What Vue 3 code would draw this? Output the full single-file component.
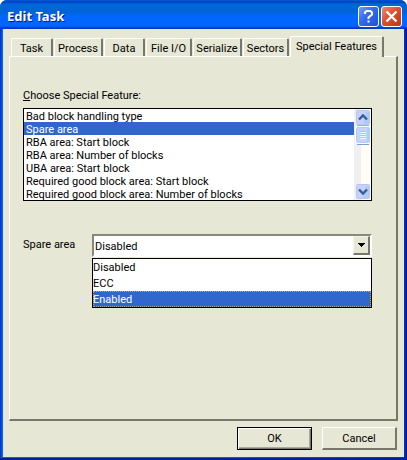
<script setup>
import { ref } from 'vue'

const tabs = ['Task', 'Process', 'Data', 'File I/O', 'Serialize', 'Sectors', 'Special Features']
const activeTab = ref('Special Features')

const features = [
  'Bad block handling type',
  'Spare area',
  'RBA area: Start block',
  'RBA area: Number of blocks',
  'UBA area: Start block',
  'Required good block area: Start block',
  'Required good block area: Number of blocks',
]
const feature = ref('Spare area')

const values = ['Disabled', 'ECC', 'Enabled']
const value = ref('Disabled')
const hovered = ref('Enabled')
</script>

<template>
  <main class="window">
    <header class="titlebar">
      <h1 class="title">Edit Task</h1>
      <button class="caption help" type="button" aria-label="Help">
        <svg viewBox="0 0 19 19" width="19" height="19" aria-hidden="true">
          <path d="M6 7V5.500L7.500 4h4L13 5.500v2L9.500 10.500V12" fill="none" stroke="#fff" stroke-width="2" />
          <rect x="8.500" y="13.500" width="2" height="2" fill="#fff" />
        </svg>
      </button>
      <button class="caption close" type="button" aria-label="Close">
        <svg viewBox="0 0 19 19" width="19" height="19" aria-hidden="true">
          <path d="M4.500 4.500l10 10M14.500 4.500l-10 10" stroke="#fff" stroke-width="2.400" />
        </svg>
      </button>
    </header>

    <div class="body">
      <div class="tabs" role="tablist">
        <button
          v-for="tab in tabs"
          :key="tab"
          type="button"
          role="tab"
          class="tab"
          :class="{ active: tab === activeTab }"
          :aria-selected="tab === activeTab"
          @click="activeTab = tab"
        >{{ tab }}</button>
      </div>

      <section class="panel" role="tabpanel">
        <label class="label" for="feature"><u>C</u>hoose Special Feature:</label>
        <div class="listbox">
          <select id="feature" v-model="feature" class="list" size="7">
            <option v-for="item in features" :key="item" :value="item">{{ item }}</option>
          </select>
          <div class="scrollbar" aria-hidden="true">
            <svg class="arrow" viewBox="0 0 16 17" width="16" height="17">
              <rect x="1.500" y="1.500" width="13" height="14" rx="1" fill="#c8d0ff" stroke="#b4c8f6" />
              <path d="M11 3h3v12H8z" fill="#aecbf5" />
              <path d="M4 10.500L8 6.500L12 10.500" fill="none" stroke="#335f94" stroke-width="2.400" />
              <path d="M2 16.500h12" stroke="#93b4dc" />
            </svg>
            <svg class="thumb" viewBox="0 0 16 19" width="16" height="19">
              <rect x=".5" y=".5" width="15" height="17" rx="2" fill="#fff" stroke="#fff" />
              <rect x="1.500" y="1.500" width="13" height="15" rx="1" fill="#c8d3ff" stroke="#b0ccf8" />
              <path d="M12 2h2v14h-2z" fill="#acd0f8" />
              <path d="M5 6.500h6M5 8.500h6M5 10.500h6M5 12.500h6" stroke="#f2f8ff" />
              <path d="M5 5.500h6M5 7.500h6M5 9.500h6M5 11.500h6" stroke="#9ccdf8" />
              <path d="M2 18.500h12" stroke="#7ba4d4" />
            </svg>
            <svg class="arrow down" viewBox="0 0 16 17" width="16" height="17">
              <rect x="1.500" y="1.500" width="13" height="14" rx="1" fill="#c8d0ff" stroke="#b4c8f6" />
              <path d="M11 3h3v12H8z" fill="#aecbf5" />
              <path d="M4 6.500L8 10.500L12 6.500" fill="none" stroke="#335f94" stroke-width="2.400" />
            </svg>
          </div>
        </div>

        <div class="field">
          <label class="field-label" for="value">Spare area</label>
          <div class="combo">
            <select id="value" v-model="value" class="combo-box">
              <option v-for="item in values" :key="item" :value="item">{{ item }}</option>
            </select>
            <span class="combo-arrow" aria-hidden="true">
              <svg viewBox="0 0 7 4" width="7" height="4"><path d="M0 0h7v1H6v1H5v1H4v1H3V3H2V2H1V1H0z" /></svg>
            </span>
            <ul class="menu" role="listbox" aria-label="Spare area">
              <li
                v-for="item in values"
                :key="item"
                class="menu-item"
                :class="{ hovered: item === hovered }"
                role="option"
                :aria-selected="item === hovered"
                @mouseenter="hovered = item"
                @click="value = item"
              >{{ item }}</li>
            </ul>
          </div>
        </div>
      </section>

      <footer class="actions">
        <button class="push default" type="button">OK</button>
        <button class="push" type="button">Cancel</button>
      </footer>
    </div>
  </main>
</template>

<style>
body {
  margin: 0;
  background: #fff;
}
</style>

<style scoped>
* {
  box-sizing: border-box;
}

.window {
  display: flex;
  flex-direction: column;
  min-height: 100vh;
  padding: 0 3px 3px;
  border-radius: 7px 7px 0 0;
  background: linear-gradient(90deg, #0036d0 0, #0036d0 1px, #0066f0 2px, #0066f0 50%, #0038c4 calc(100% - 3px), #001494 100%);
  box-shadow: inset 0 -2px #00209c;
  color: #000;
  font: 11px/13px Roboto, "Liberation Sans", sans-serif;
}

button,
select {
  font: inherit;
  color: inherit;
}

.titlebar {
  display: flex;
  align-items: center;
  gap: 2px;
  height: 29px;
  margin: 0 -3px;
  padding: 3px 5px 0 7px;
  border-radius: 7px 7px 0 0;
  background: linear-gradient(#0058dc 0, #0040c0 2px, #0066d8 4px, #0064d4 12px, #0066ff 16px, #0066ff 26px, #0038d0 28px);
}

.title {
  flex: 1;
  margin: 0;
  color: #fff;
  font: bold 13px/16px "Noto Sans", "Open Sans", sans-serif;
  text-shadow: 1px 1px #00148c;
}

.caption {
  display: grid;
  place-items: center;
  width: 21px;
  height: 21px;
  padding: 0;
  border: 1px solid #fff;
  border-radius: 3px;
}

.help {
  background: linear-gradient(135deg, #6e98fa, #3369ee 45%, #1f52d8);
}

.close {
  background: linear-gradient(135deg, #ec8a70, #dc5030 45%, #bc3410);
}

.body {
  display: flex;
  flex: 1;
  flex-direction: column;
  padding: 7px 6px;
  background: #e6e7d5;
}

.tabs {
  display: grid;
  grid-template-columns: 42px 49px 41px 46px 49px 46px 94px;
  align-items: end;
  gap: 1px;
  padding: 0 2px;
}

.tab {
  height: 18px;
  padding: 2px 0 0;
  border: solid;
  border-width: 1px 2px 0 1px;
  border-color: #fff #77776c #fff #fff;
  border-radius: 2px 2px 0 0;
  background: #e6e7d5;
  white-space: nowrap;
}

.tab.active {
  position: relative;
  height: 21px;
  margin-bottom: -1px;
  padding: 0 0 2px;
}

.panel {
  flex: 1;
  padding: 32px 24px 0 13px;
  border: solid;
  border-width: 1px 2px 2px 1px;
  border-color: #fff #77776c #77776c #fff;
}

.label {
  display: block;
  margin-bottom: 6px;
}

.listbox {
  display: flex;
  height: 93px;
  border: 1px solid #000;
  background: #fff;
}

.list {
  flex: 1;
  min-width: 0;
  height: 91px;
  padding: 0;
  border: 0;
  outline: 0;
  overflow: hidden;
  background: #fff;
  scrollbar-width: none;
}

.list option {
  height: 13px;
  min-height: 13px;
  padding: 1px 2px 0;
  color: #000;
  line-height: 12px;
}

.list option:checked {
  background: linear-gradient(#3166cc, #3166cc);
  color: #fff;
  -webkit-text-fill-color: #fff;
}

.scrollbar {
  display: flex;
  flex-direction: column;
  width: 17px;
  padding-left: 1px;
  background: linear-gradient(90deg, #f0f0f0 7px, #fffdf5 7px);
}

.down {
  margin-top: auto;
}

.field {
  display: flex;
  align-items: flex-start;
  margin-top: 33px;
}

.field-label {
  width: 69px;
  padding-top: 4px;
}

.combo {
  position: relative;
  flex: 1;
}

.combo-box {
  display: block;
  width: 100%;
  height: 23px;
  padding: 1px 20px 0 1px;
  appearance: none;
  border: 2px solid;
  border-color: #88887c #fff #fff #88887c;
  border-radius: 0;
  outline: 0;
  background: #fff;
}

.combo-arrow {
  position: absolute;
  top: 2px;
  right: 2px;
  display: grid;
  place-items: center;
  width: 17px;
  height: 19px;
  border: solid;
  border-width: 1px 2px 2px 1px;
  border-color: #f4f4ea #77776c #77776c #f4f4ea;
  background: #e6e7d5;
  pointer-events: none;
}

.menu {
  position: absolute;
  top: 24px;
  right: 0;
  left: 0;
  margin: 0;
  padding: 0;
  border: 1px solid #000;
  background: #fff;
  list-style: none;
}

.menu-item {
  height: 16px;
  padding: 1px 0 0;
  line-height: 16px;
}

.menu-item.hovered {
  padding: 0;
  border: 1px dotted #d8a030;
  background: #3166cc;
  color: #fff;
  line-height: 16px;
  text-indent: -1px;
}

.actions {
  display: flex;
  justify-content: flex-end;
  gap: 10px;
  padding: 6px 1px 0 0;
}

.push {
  width: 75px;
  height: 23px;
  padding: 0;
  border: solid;
  border-width: 1px 2px 2px 1px;
  border-color: #fff #77776c #77776c #fff;
  background: #e6e7d5;
}

.push.default {
  border: 1px solid #000;
  box-shadow: inset 1px 1px #fff, inset -1px -1px #77776c, inset -2px -2px #aaaa98;
}
</style>
